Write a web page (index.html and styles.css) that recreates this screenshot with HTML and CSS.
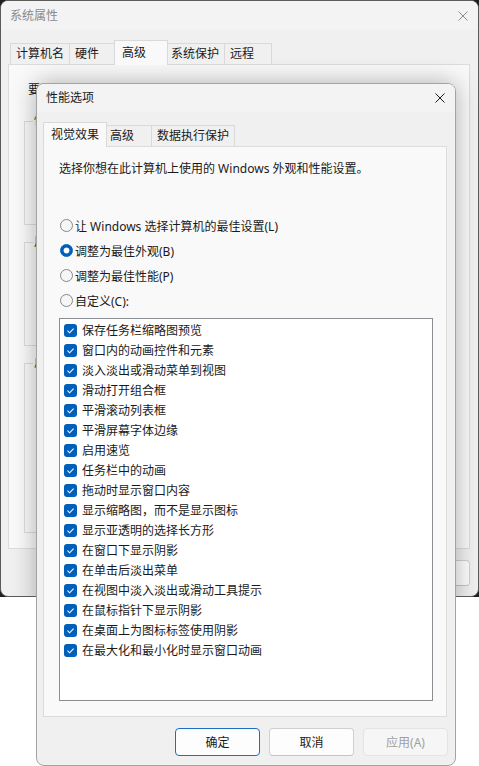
FILE: index.html
```html
<!DOCTYPE html>
<html lang="zh-CN">
<head>
<meta charset="utf-8">
<title>性能选项</title>
<link rel="stylesheet" href="styles.css">
</head>
<body>
<div class="desktop">
  <div class="win">
    <div class="win-title">
      <span class="title-text">系统属性</span>
      <svg class="close" width="10" height="10" viewBox="0 0 10 10"><path d="M0.5 0.5L9.5 9.5M9.5 0.5L0.5 9.5" stroke="currentColor" stroke-width="1" fill="none"/></svg>
    </div>
    <div class="tabs bg-tabs">
      <div class="tab">计算机名</div>
      <div class="tab">硬件</div>
      <div class="tab sel">高级</div>
      <div class="tab">系统保护</div>
      <div class="tab">远程</div>
    </div>
    <div class="bg-panel">
      <p class="admin-note">要进行大多数更改，你必须作为管理员登录。</p>
      <div class="group g1"><span class="group-label">性能</span></div>
      <div class="group g2"><span class="group-label">用户配置文件</span></div>
      <div class="group g3"><span class="group-label">启动和故障恢复</span></div>
    </div>
    <div class="bg-btns">
      <span class="btn">确定</span>
      <span class="btn">取消</span>
      <span class="btn">应用(A)</span>
    </div>
    <div class="dlg-shadow"></div>
  </div>
</div>

<div class="dialog">
  <div class="dlg-title">
    <span class="title-text">性能选项</span>
    <svg class="close" width="10" height="10" viewBox="0 0 10 10"><path d="M0.5 0.5L9.5 9.5M9.5 0.5L0.5 9.5" stroke="currentColor" stroke-width="1" fill="none"/></svg>
  </div>
  <div class="tabs dlg-tabs">
    <div class="tab sel">视觉效果</div>
    <div class="tab">高级</div>
    <div class="tab">数据执行保护</div>
  </div>
  <div class="dlg-panel">
    <p class="desc">选择你想在此计算机上使用的 Windows 外观和性能设置。</p>
    <div class="options">
      <div class="radio-row"><span class="radio"></span>让 Windows 选择计算机的最佳设置(L)</div>
      <div class="radio-row"><span class="radio on"></span>调整为最佳外观(B)</div>
      <div class="radio-row"><span class="radio"></span>调整为最佳性能(P)</div>
      <div class="radio-row"><span class="radio"></span>自定义(C):</div>
    </div>
    <div class="listbox">
      <div class="item"><span class="check"><svg width="13" height="13" viewBox="0 0 13 13"><path d="M3.5 6.7L5.6 8.8L9.6 4.6" stroke="#fff" stroke-width="1.1" fill="none"/></svg></span>保存任务栏缩略图预览</div>
      <div class="item"><span class="check"><svg width="13" height="13" viewBox="0 0 13 13"><path d="M3.5 6.7L5.6 8.8L9.6 4.6" stroke="#fff" stroke-width="1.1" fill="none"/></svg></span>窗口内的动画控件和元素</div>
      <div class="item"><span class="check"><svg width="13" height="13" viewBox="0 0 13 13"><path d="M3.5 6.7L5.6 8.8L9.6 4.6" stroke="#fff" stroke-width="1.1" fill="none"/></svg></span>淡入淡出或滑动菜单到视图</div>
      <div class="item"><span class="check"><svg width="13" height="13" viewBox="0 0 13 13"><path d="M3.5 6.7L5.6 8.8L9.6 4.6" stroke="#fff" stroke-width="1.1" fill="none"/></svg></span>滑动打开组合框</div>
      <div class="item"><span class="check"><svg width="13" height="13" viewBox="0 0 13 13"><path d="M3.5 6.7L5.6 8.8L9.6 4.6" stroke="#fff" stroke-width="1.1" fill="none"/></svg></span>平滑滚动列表框</div>
      <div class="item"><span class="check"><svg width="13" height="13" viewBox="0 0 13 13"><path d="M3.5 6.7L5.6 8.8L9.6 4.6" stroke="#fff" stroke-width="1.1" fill="none"/></svg></span>平滑屏幕字体边缘</div>
      <div class="item"><span class="check"><svg width="13" height="13" viewBox="0 0 13 13"><path d="M3.5 6.7L5.6 8.8L9.6 4.6" stroke="#fff" stroke-width="1.1" fill="none"/></svg></span>启用速览</div>
      <div class="item"><span class="check"><svg width="13" height="13" viewBox="0 0 13 13"><path d="M3.5 6.7L5.6 8.8L9.6 4.6" stroke="#fff" stroke-width="1.1" fill="none"/></svg></span>任务栏中的动画</div>
      <div class="item"><span class="check"><svg width="13" height="13" viewBox="0 0 13 13"><path d="M3.5 6.7L5.6 8.8L9.6 4.6" stroke="#fff" stroke-width="1.1" fill="none"/></svg></span>拖动时显示窗口内容</div>
      <div class="item"><span class="check"><svg width="13" height="13" viewBox="0 0 13 13"><path d="M3.5 6.7L5.6 8.8L9.6 4.6" stroke="#fff" stroke-width="1.1" fill="none"/></svg></span>显示缩略图，而不是显示图标</div>
      <div class="item"><span class="check"><svg width="13" height="13" viewBox="0 0 13 13"><path d="M3.5 6.7L5.6 8.8L9.6 4.6" stroke="#fff" stroke-width="1.1" fill="none"/></svg></span>显示亚透明的选择长方形</div>
      <div class="item"><span class="check"><svg width="13" height="13" viewBox="0 0 13 13"><path d="M3.5 6.7L5.6 8.8L9.6 4.6" stroke="#fff" stroke-width="1.1" fill="none"/></svg></span>在窗口下显示阴影</div>
      <div class="item"><span class="check"><svg width="13" height="13" viewBox="0 0 13 13"><path d="M3.5 6.7L5.6 8.8L9.6 4.6" stroke="#fff" stroke-width="1.1" fill="none"/></svg></span>在单击后淡出菜单</div>
      <div class="item"><span class="check"><svg width="13" height="13" viewBox="0 0 13 13"><path d="M3.5 6.7L5.6 8.8L9.6 4.6" stroke="#fff" stroke-width="1.1" fill="none"/></svg></span>在视图中淡入淡出或滑动工具提示</div>
      <div class="item"><span class="check"><svg width="13" height="13" viewBox="0 0 13 13"><path d="M3.5 6.7L5.6 8.8L9.6 4.6" stroke="#fff" stroke-width="1.1" fill="none"/></svg></span>在鼠标指针下显示阴影</div>
      <div class="item"><span class="check"><svg width="13" height="13" viewBox="0 0 13 13"><path d="M3.5 6.7L5.6 8.8L9.6 4.6" stroke="#fff" stroke-width="1.1" fill="none"/></svg></span>在桌面上为图标标签使用阴影</div>
      <div class="item"><span class="check"><svg width="13" height="13" viewBox="0 0 13 13"><path d="M3.5 6.7L5.6 8.8L9.6 4.6" stroke="#fff" stroke-width="1.1" fill="none"/></svg></span>在最大化和最小化时显示窗口动画</div>
    </div>
  </div>
  <div class="dlg-btns">
    <span class="btn default">确定</span>
    <span class="btn">取消</span>
    <span class="btn disabled">应用(A)</span>
  </div>
</div>
</body>
</html>
```
FILE: styles.css
```css
body {
  margin: 0;
  background: #ffffff;
  font-family: "Noto Sans", "Noto Sans CJK SC", sans-serif;
  font-size: 12px;
  color: #1a1a1a;
  position: relative;
  height: 766px;
  overflow: hidden;
}

/* background window */
.desktop {
  height: 597px;
  background: #1e1e1e;
}
.win {
  position: relative;
  box-sizing: border-box;
  height: 597px;
  border: 1px solid #5a5a5a;
  border-radius: 8px;
  background: #f0f0f0;
  overflow: hidden;
}
.win-title {
  height: 29px;
  display: flex;
  align-items: center;
  justify-content: space-between;
  padding: 0 10px 0 9px;
  background: #f3f3f3;
  color: #8a8a8a;
}
.title-text {
  line-height: 16px;
}
.close {
  display: block;
}

.tabs {
  display: flex;
  align-items: flex-end;
  height: 24px;
  position: relative;
  z-index: 1;
}
.tab {
  box-sizing: border-box;
  height: 21px;
  min-width: 48px;
  padding: 0 5px;
  border: 1px solid #d9d9d9;
  border-bottom: 0;
  margin-right: -1px;
  line-height: 20px;
  background: #f0f0f0;
  white-space: nowrap;
}
.tab.sel {
  height: 25px;
  min-width: 52px;
  margin: 0 -3px -1px -2px;
  padding: 0 7px;
  background: #f9f9f9;
  position: relative;
  z-index: 2;
  line-height: 23px;
}
.bg-tabs {
  margin-top: 10px;
  padding-left: 9px;
}
.bg-tabs .tab.sel {
  min-width: 54px;
}
.bg-panel {
  box-sizing: border-box;
  height: 485px;
  margin: 0 8px 0 7px;
  border: 1px solid #dcdcdc;
  background: #f9f9f9;
  padding-top: 17px;
}
.admin-note {
  margin: 0 0 0 19px;
  line-height: 16px;
  white-space: nowrap;
}
.group {
  position: relative;
  box-sizing: border-box;
  margin: 17px 15px 0;
  height: 104px;
  border: 1px solid #dcdcdc;
}
.g1 {
  margin-top: 23px;
}
.g3 {
  height: 170px;
}
.group-label {
  position: absolute;
  top: -9px;
  left: 8px;
  padding: 0 1px;
  line-height: 16px;
  white-space: nowrap;
  background: #f9f9f9;
}
.bg-btns {
  display: flex;
  justify-content: flex-end;
  gap: 8px;
  padding: 11px 8px 0 0;
}
.bg-btns .btn {
  width: 75px;
  height: 26px;
}
.dlg-shadow {
  position: absolute;
  left: 35px;
  top: 82px;
  width: 420px;
  height: 700px;
  border-radius: 8px;
  box-shadow: 0 0 24px rgba(0, 0, 0, 0.3);
}

/* dialog */
.dialog {
  position: absolute;
  left: 36px;
  top: 83px;
  width: 420px;
  height: 683px;
  box-sizing: border-box;
  border: 1px solid #a3a3a3;
  border-radius: 8px;
  background: #f0f0f0;
  overflow: hidden;
  display: flex;
  flex-direction: column;
}
.dlg-title {
  height: 28px;
  flex: none;
  display: flex;
  align-items: center;
  justify-content: space-between;
  padding: 0 10px 0 9px;
  background: #f3f3f3;
  color: #1a1a1a;
}
.dlg-tabs {
  margin-top: 10px;
  padding-left: 8px;
  flex: none;
}
.dlg-panel {
  flex: none;
  box-sizing: border-box;
  height: 571px;
  margin: 0 8px 0 6px;
  border: 1px solid #dcdcdc;
  background: #f9f9f9;
  padding: 14px 0 0 15px;
}
.desc {
  margin: 0;
  line-height: 16px;
}
.options {
  margin-top: 36px;
}
.radio-row {
  height: 25px;
  display: flex;
  align-items: center;
  white-space: nowrap;
}
.radio {
  flex: none;
  width: 13px;
  height: 13px;
  box-sizing: border-box;
  border: 1px solid #868686;
  border-radius: 50%;
  background: #f6f6f6;
  margin: 0 2px 0 1px;
}
.radio.on {
  border-color: #005fb8;
  background: radial-gradient(circle, #ffffff 0 2.6px, #005fb8 3.3px);
}
.listbox {
  margin-top: 5px;
  width: 374px;
  height: 383px;
  box-sizing: border-box;
  border: 1px solid #8a8d92;
  background: #ffffff;
  padding-top: 1px;
}
.item {
  height: 20px;
  display: flex;
  align-items: center;
  padding-left: 4px;
  white-space: nowrap;
}
.check {
  flex: none;
  display: block;
  width: 13px;
  height: 13px;
  border-radius: 3px;
  background: #005fb8;
  margin-right: 5px;
}
.check svg {
  display: block;
}
.dlg-btns {
  display: flex;
  justify-content: flex-end;
  gap: 9px;
  padding: 11px 7px 0 0;
}
.btn {
  width: 85px;
  height: 28px;
  box-sizing: border-box;
  border: 1px solid #d0d0d0;
  border-bottom-color: #c4c4c4;
  border-radius: 4px;
  background: #fdfdfd;
  color: #1a1a1a;
  display: flex;
  align-items: center;
  justify-content: center;
}
.btn.default {
  border-color: #1a6fc4;
}
.btn.disabled {
  background: #f6f6f6;
  border-color: #e3e3e3;
  color: #a0a0a0;
}
```
